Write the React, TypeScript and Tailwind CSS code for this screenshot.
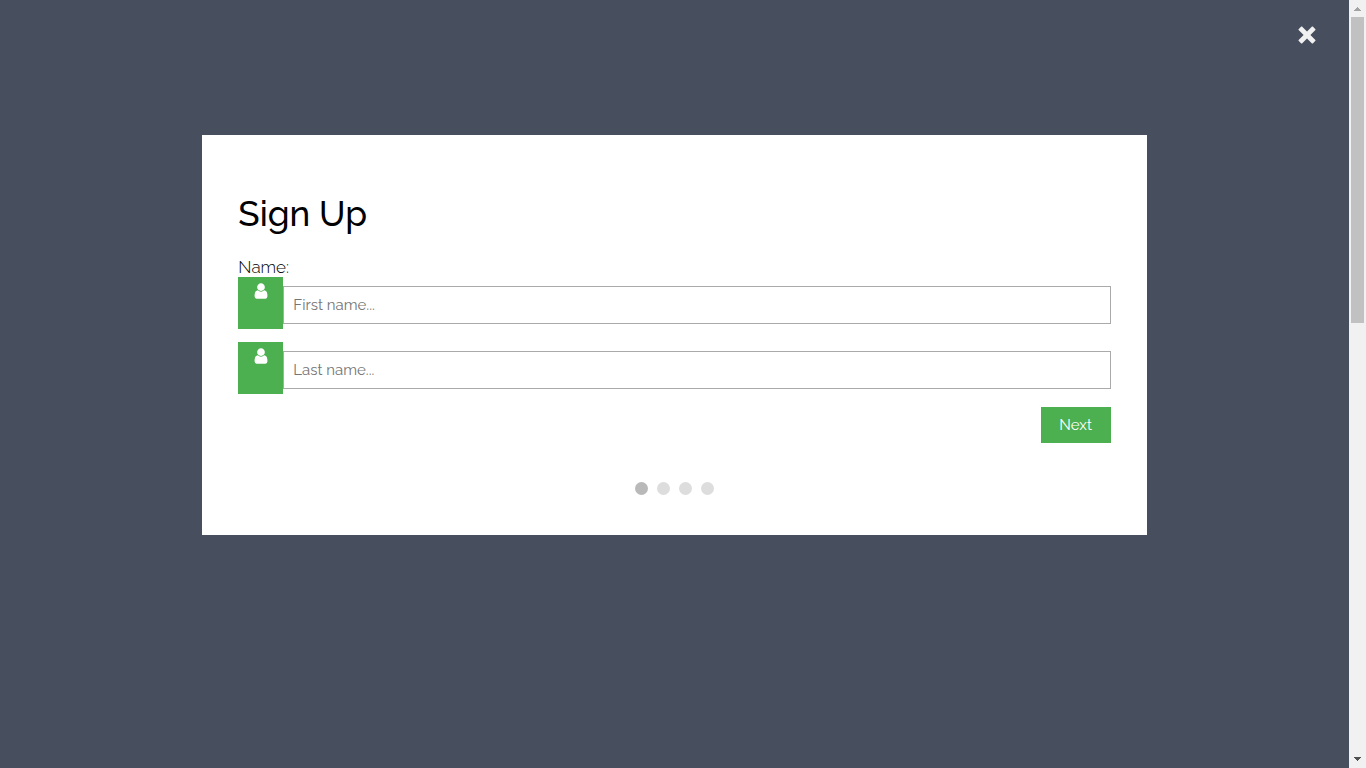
import React from "react";

function UserIcon() {
  return (
    <svg viewBox="0 0 1792 1792" className="size-[18px] fill-white" aria-hidden="true">
      <path d="M1536 1399q0 109-62.5 187t-150.5 78h-854q-88 0-150.5-78t-62.5-187q0-85 8.5-160.5t31.5-152 58.5-131 94-89 134.5-34.5q131 128 313 128t313-128q76 0 134.5 34.5t94 89 58.5 131 31.5 152 8.5 160.5zm-256-887q0 159-112.5 271.5t-271.5 112.5-271.5-112.5-112.5-271.5 112.5-271.5 271.5-112.5 271.5 112.5 112.5 271.5z" />
    </svg>
  );
}

function CloseIcon() {
  return (
    <svg viewBox="0 0 18 18" className="size-[18px] fill-[#f1f1f1]" aria-hidden="true">
      <path d="M3.2.6Q3.6.2 4 .6L9 5.6 14 .6q.4-.4.8 0L17.4 3.2q.4.4 0 .8L12.4 9l5 5q.4.4 0 .8l-2.6 2.6q-.4.4-.8 0L9 12.4l-5 5q-.4.4-.8 0L.6 14.8q-.4-.4 0-.8L5.6 9 .6 4q-.4-.4 0-.8z" />
    </svg>
  );
}

function NameField({ id, placeholder }: { id: string; placeholder: string }) {
  return (
    <div className="flex h-[52px] items-center">
      <label htmlFor={id} aria-label={placeholder} className="flex h-full w-[45px] shrink-0 justify-center bg-[#4caf50] pt-[5px]">
        <UserIcon />
      </label>
      <input
        id={id}
        type="text"
        placeholder={placeholder}
        className="mt-1 h-[38px] min-w-0 flex-1 border border-[#aaaaaa] bg-white px-[9px] text-[15px] text-black outline-none placeholder:text-[#757575]"
      />
    </div>
  );
}

function ScrollTrack() {
  return (
    <div className="flex w-[17px] shrink-0 flex-col items-center bg-[#f1f1f1]" aria-hidden="true">
      <div className="flex h-[17px] items-center">
        <svg viewBox="0 0 7 4" className="h-1 w-[7px] fill-[#a3a3a3]" shapeRendering="crispEdges">
          <path d="M3 0h1v1h1v1h1v1h1v1H0V3h1V2h1V1h1z" />
        </svg>
      </div>
      <div className="flex w-full flex-1 justify-center">
        <div className="h-[41.7%] w-[13px] bg-[#c1c1c1]" />
      </div>
      <div className="flex h-[17px] items-start pt-1.5">
        <svg viewBox="0 0 7 4" className="h-1 w-[7px] fill-[#505050]" shapeRendering="crispEdges">
          <path d="M0 0h7v1H6v1H5v1H4v1H3V3H2V2H1V1H0z" />
        </svg>
      </div>
    </div>
  );
}

const steps = ["Name", "Contact", "Birthday", "Login"];

export default function App() {
  return (
    <div className="flex min-h-screen bg-[#474e5d] font-['Raleway','Lato',sans-serif] text-black">
      <main className="flex min-w-0 flex-1 flex-col items-center">
        <div className="flex h-[135px] w-full items-start justify-end pt-[26px] pr-[33px]">
          <button type="button" aria-label="Close">
            <CloseIcon />
          </button>
        </div>
        <form className="w-[70%] bg-white px-9 pt-14 pb-10" onSubmit={(e) => e.preventDefault()}>
          <h1 className="text-[35px] leading-[46px] font-medium">Sign Up</h1>
          <fieldset className="mt-5">
            <legend className="text-[17px] leading-5 font-light">Name:</legend>
            <div className="flex flex-col gap-[13px]">
              <NameField id="first-name" placeholder="First name..." />
              <NameField id="last-name" placeholder="Last name..." />
            </div>
          </fieldset>
          <div className="mt-[13px] flex justify-end">
            <button type="submit" className="h-9 w-[70px] bg-[#4caf50] text-[15px] text-white">
              Next
            </button>
          </div>
          <div className="mt-[39px] flex justify-center gap-[9px]">
            {steps.map((step, i) => (
              <span key={step} className={`size-[13px] rounded-full ${i === 0 ? "bg-[#b9b9b9]" : "bg-[#dddddd]"}`} />
            ))}
          </div>
        </form>
      </main>
      <ScrollTrack />
    </div>
  );
}
